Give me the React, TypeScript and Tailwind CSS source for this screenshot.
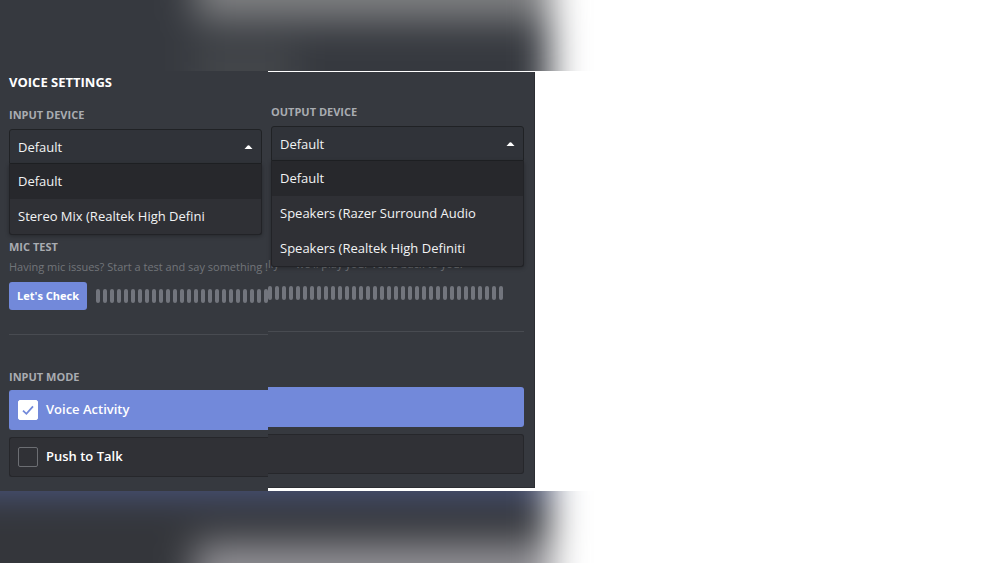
import { ReactNode } from "react";

interface DeviceSelectProps {
  id: string;
  label: string;
  options: string[];
}

const inputDevices = ["Default", "Stereo Mix (Realtek High Defini"];

const outputDevices = [
  "Default",
  "Speakers (Razer Surround Audio",
  "Speakers (Realtek High Definiti",
];

const Label = ({ children }: { children: ReactNode }) => (
  <h2 className="text-[11px] leading-5 font-bold text-[#a9acb1]">{children}</h2>
);

const DeviceSelect = ({ id, label, options }: DeviceSelectProps) => {
  return (
    <div>
      <label
        htmlFor={id}
        className="block text-[11px] leading-5 font-bold text-[#a9acb1]"
      >
        {label}
      </label>
      <div className="relative mt-1 text-[13px] text-[#f2f3f4]">
        <select
          id={id}
          className="block h-[35px] w-full appearance-none rounded-t-[3px] border border-[#202225] bg-[#303339] px-2 pt-0.5 outline-none"
        >
          {options.map((option) => (
            <option key={option}>{option}</option>
          ))}
        </select>
        <svg
          viewBox="0 0 10 5"
          className="pointer-events-none absolute top-4 right-[9px] h-1 w-[9px]"
        >
          <path d="M0 5 L4 0.6 Q5 -0.2 6 0.6 L10 5 Z" fill="#fff" />
        </svg>
        {/* Open menu */}
        <ul
          role="listbox"
          aria-label={label}
          className="absolute top-full right-0 left-0 z-10 rounded-b-[3px] border border-t-0 border-[#222327] bg-[#2f3035] shadow-[0_1px_4px_rgba(0,0,0,0.3)]"
        >
          {options.map((option, i) => (
            <li
              key={option}
              role="option"
              aria-selected={i === 0}
              className="h-[35px] truncate px-2 leading-[34px] aria-selected:bg-[#27282c]"
            >
              {option}
            </li>
          ))}
        </ul>
      </div>
    </div>
  );
};

const LevelBars = ({ count }: { count: number }) => (
  <div className="flex gap-[3px] overflow-hidden">
    {Array.from({ length: count }, (_, i) => (
      <span key={i} className="h-[14px] w-1 shrink-0 rounded-[2px] bg-[#72757d]" />
    ))}
  </div>
);

const ModeOption = ({ label, checked }: { label: string; checked?: boolean }) => (
  <label className="flex h-10 items-center gap-2 rounded-l-[3px] border border-r-0 border-[#26272b] bg-[#303136] pl-2 text-[13px] font-semibold text-white has-checked:border-[#7289da] has-checked:bg-[#7289da]">
    <span className="grid">
      <input
        type="checkbox"
        defaultChecked={checked}
        className="peer col-start-1 row-start-1 size-5 appearance-none rounded-[2px] border border-[#6c6e73] checked:border-white checked:bg-white"
      />
      <svg
        viewBox="0 0 20 20"
        className="pointer-events-none invisible col-start-1 row-start-1 size-5 peer-checked:visible"
      >
        <path d="M5 10.6 L8.4 13.8 L15 6.4" fill="none" stroke="#7289da" strokeWidth="1.8" />
      </svg>
    </span>
    {label}
  </label>
);

const App = () => {
  return (
    <div className="flex min-h-screen flex-col bg-white font-['Open_Sans',sans-serif]">
      {/* Blurred strip above the panes */}
      <div className="relative h-[71px] overflow-hidden">
        <div className="absolute -inset-y-24 -left-24 right-[45%] overflow-hidden bg-[#36393f] blur-[18px]">
          <div className="absolute top-0 right-0 left-[45%] h-[116px] bg-[#808183] blur-[4px]" />
          <div className="absolute top-[140px] left-[45%] h-24 w-[100px] bg-[#43464a]" />
        </div>
      </div>

      <main className="flex items-start">
        <section className="w-[26.8%] overflow-hidden bg-[#36393f] pt-px pb-[14px] pl-[9px]">
          <h1 className="text-[13px] leading-5 font-bold text-white">VOICE SETTINGS</h1>
          <div className="mt-[13px] mr-[6px]">
            <DeviceSelect id="input-device" label="INPUT DEVICE" options={inputDevices} />
          </div>
          <div className="mt-[73px]">
            <Label>MIC TEST</Label>
            <p className="text-[11px] leading-5 whitespace-nowrap text-[#72757a]">
              Having mic issues? Start a test and say something !
            </p>
          </div>
          <div className="mt-[5px] flex items-center gap-[9px]">
            <button className="h-7 shrink-0 rounded-[3px] bg-[#7289da] px-2 text-[11px] font-bold whitespace-nowrap text-white">
              Let's Check
            </button>
            <LevelBars count={25} />
          </div>
          <hr className="mt-6 border-[#484b51]" />
          <div className="mt-8">
            <Label>INPUT MODE</Label>
            <div className="mt-[3px] flex flex-col gap-[7px]">
              <ModeOption label="Voice Activity" checked />
              <ModeOption label="Push to Talk" />
            </div>
          </div>
        </section>

        <section className="mt-px w-[26.7%] border-r border-b border-[#2c2e33] bg-[#36393f] pt-[30px] pr-[10px] pb-[13px]">
          <div className="ml-[3px]">
            <DeviceSelect id="output-device" label="OUTPUT DEVICE" options={outputDevices} />
          </div>
          <p className="mt-[93px] text-[11px] leading-5 whitespace-nowrap text-[#72757a]">
            lly — we'll play your voice back to you.
          </p>
          <div className="mt-[5px] flex h-7 items-center">
            <LevelBars count={34} />
          </div>
          <hr className="mt-6 border-[#484b51]" />
          <div className="mt-[55px] flex flex-col gap-[7px]">
            <div className="h-10 rounded-r-[3px] bg-[#7289da]" />
            <div className="h-10 rounded-r-[3px] border border-l-0 border-[#26272b] bg-[#303136]" />
          </div>
        </section>
      </main>

      {/* Blurred strip below the panes */}
      <div className="relative grow overflow-hidden">
        <div className="absolute -inset-y-24 -left-24 right-[45%] overflow-hidden bg-[#34363b] blur-[18px]">
          <div className="absolute top-0 right-0 left-0 h-[100px] bg-[#4a5680]" />
          <div className="absolute right-0 bottom-0 left-[45%] h-[116px] bg-[#929196] blur-[4px]" />
        </div>
      </div>
    </div>
  );
};

export default App;
